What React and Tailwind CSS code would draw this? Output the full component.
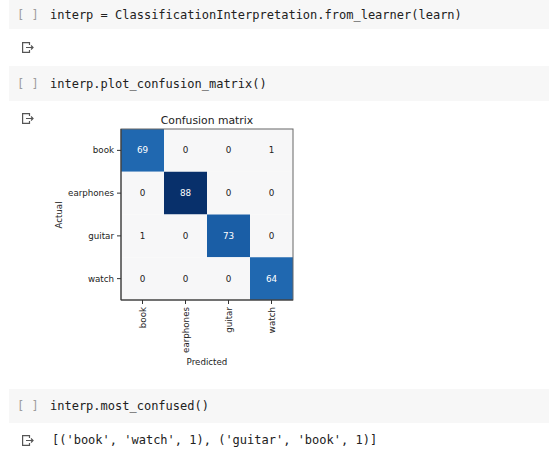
import React from 'react';

const mono = { fontFamily: '"DejaVu Sans Mono", "Liberation Mono", monospace' };

const OutputIcon = () => (
  <svg width="12" height="11" viewBox="0 0 12 11" fill="none" stroke="#555" strokeWidth="1.2">
    <path d="M7.5 3 V0.6 H0.6 V10.4 H7.5 V8" />
    <path d="M4 5.5 H11 M9 3.5 L11 5.5 L9 7.5" />
  </svg>
);

const CodeCell = ({ code, h = 'h-[34px]' }) => (
  <div className={`ml-[9px] ${h} bg-[#f7f7f7] flex items-center text-[12px] leading-none`} style={mono}>
    <span className="ml-[8px] w-[33px] text-[#9e9e9e] whitespace-pre">[ ]</span>
    <span className="text-[#212121] whitespace-pre">{code}</span>
  </div>
);

const labels = ['book', 'earphones', 'guitar', 'watch'];
const matrix = [
  [69, 0, 0, 1],
  [0, 88, 0, 0],
  [1, 0, 73, 0],
  [0, 0, 0, 64],
];
const cellColor = (v) => {
  if (v === 88) return '#08306b';
  if (v === 73) return '#1a5ea6';
  if (v > 60) return '#2068b0';
  return '#f7f7f8';
};

const ConfusionPlot = () => {
  const x0 = 81, y0 = 24, cw = 43, ch = 42.75;
  const font = '"DejaVu Sans", "Liberation Sans", sans-serif';
  return (
    <svg width="290" height="270" className="block" style={{ fontFamily: font }}>
      <text x={x0 + 2 * cw} y={19} textAnchor="middle" fontSize="10.8" fill="#222">Confusion matrix</text>
      {matrix.map((row, r) =>
        row.map((v, c) => (
          <g key={`${r}-${c}`}>
            <rect x={x0 + c * cw} y={y0 + r * ch} width={cw} height={ch} fill={cellColor(v)} />
            <text
              x={x0 + c * cw + cw / 2}
              y={y0 + r * ch + ch / 2}
              textAnchor="middle"
              dominantBaseline="central"
              fontSize="8.8"
              fill={v > 60 ? '#ffffff' : '#222'}
            >
              {v}
            </text>
          </g>
        ))
      )}
      <rect x={x0} y={y0} width={4 * cw} height={4 * ch} fill="none" stroke="#666" strokeWidth="1" />
      <line x1={x0} y1={y0} x2={x0} y2={y0 + 4 * ch} stroke="#333" strokeWidth="1" />
      <line x1={x0} y1={y0 + 4 * ch} x2={x0 + 4 * cw} y2={y0 + 4 * ch} stroke="#333" strokeWidth="1" />
      {labels.map((l, i) => (
        <g key={l}>
          <line x1={x0 - 4} y1={y0 + i * ch + ch / 2} x2={x0} y2={y0 + i * ch + ch / 2} stroke="#333" />
          <text x={74} y={y0 + i * ch + ch / 2} textAnchor="end" dominantBaseline="central" fontSize="8.7" fill="#222">{l}</text>
          <line x1={x0 + i * cw + cw / 2} y1={y0 + 4 * ch} x2={x0 + i * cw + cw / 2} y2={y0 + 4 * ch + 4} stroke="#333" />
          <text
            x={x0 + i * cw + cw / 2}
            y={202}
            textAnchor="end"
            dominantBaseline="central"
            fontSize="8.7"
            fill="#222"
            transform={`rotate(-90 ${x0 + i * cw + cw / 2} 202)`}
          >
            {l}
          </text>
        </g>
      ))}
      <text x={19} y={110} textAnchor="middle" dominantBaseline="central" fontSize="8.7" fill="#222" transform="rotate(-90 19 110)">Actual</text>
      <text x={x0 + 2 * cw} y={257} textAnchor="middle" dominantBaseline="central" fontSize="8.7" fill="#222">Predicted</text>
    </svg>
  );
};

export default function App() {
  return (
    <div className="w-[549px] h-[456px] bg-white overflow-hidden">
      <CodeCell code="interp = ClassificationInterpretation.from_learner(learn)" h="h-[29px]" />
      <div className="h-[37px] flex items-center pl-[22px]">
        <OutputIcon />
      </div>
      <CodeCell code="interp.plot_confusion_matrix()" h="h-[35px]" />
      <div className="h-[288px] flex items-start">
        <div className="pl-[22px] pt-[12px]">
          <OutputIcon />
        </div>
        <div className="ml-[6px] mt-[4px]">
          <ConfusionPlot />
        </div>
      </div>
      <CodeCell code="interp.most_confused()" h="h-[34px]" />
      <div className="h-[33px] flex items-center text-[12px]" style={mono}>
        <div className="pl-[22px] pr-[18px] pt-[2px]">
          <OutputIcon />
        </div>
        <span className="text-[#212121] whitespace-pre">[('book', 'watch', 1), ('guitar', 'book', 1)]</span>
      </div>
    </div>
  );
}
